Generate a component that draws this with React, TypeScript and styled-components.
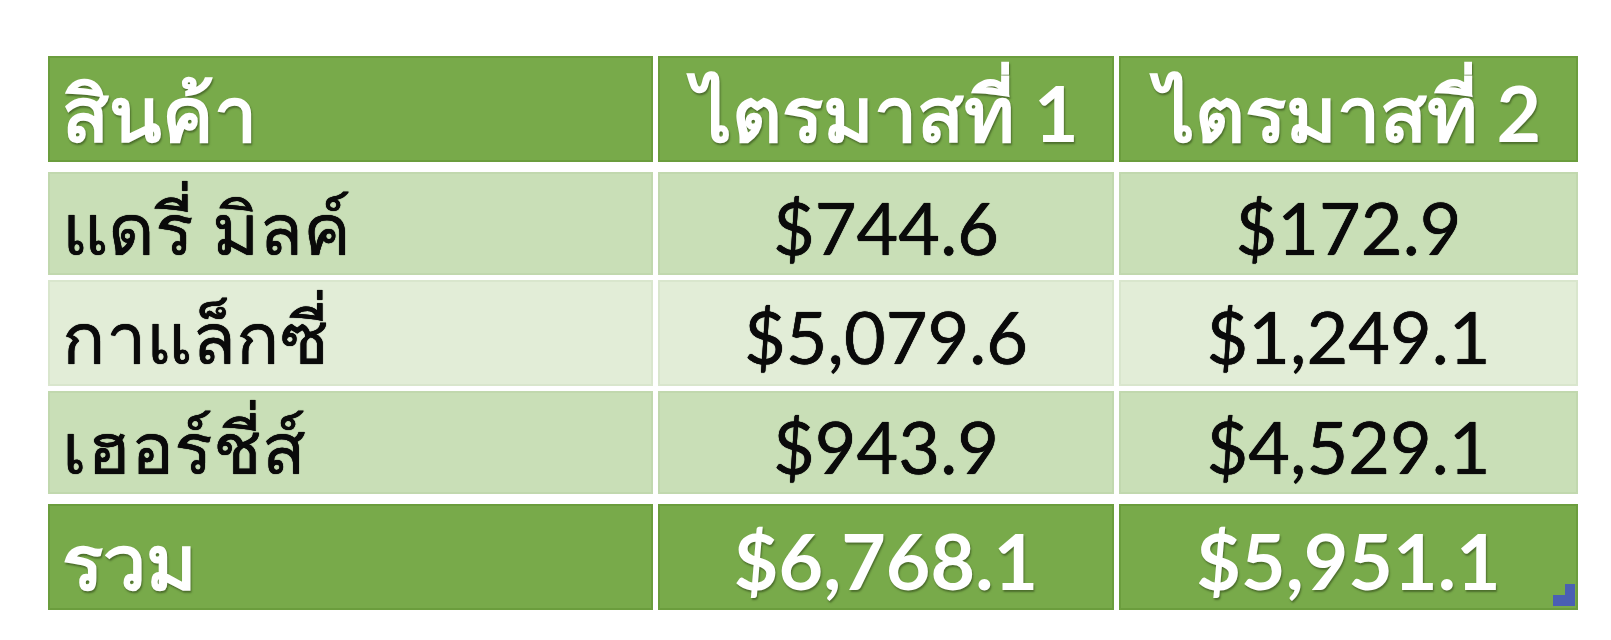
import React from "react";
import styled, { createGlobalStyle } from "styled-components";

const GlobalStyle = createGlobalStyle`
  html, body {
    margin: 0;
    padding: 0;
    background: #ffffff;
  }
  body {
    font-family: Lato, "Noto Sans", "DejaVu Sans", sans-serif;
  }
`;

type Row = { name: string; q1: string; q2: string };

const rows: Row[] = [
  { name: "แดรี่ มิลค์", q1: "$744.6", q2: "$172.9" },
  { name: "กาแล็กซี่", q1: "$5,079.6", q2: "$1,249.1" },
  { name: "เฮอร์ชี่ส์", q1: "$943.9", q2: "$4,529.1" },
];

const Page = styled.div`
  width: 1611px;
  height: 640px;
  padding: 56px 33px 0 48px;
  box-sizing: border-box;
`;

const Table = styled.div`
  position: relative;
  width: 1530px;
  display: flex;
  flex-direction: column;
  gap: 10px;
`;

const Section = styled.div<{ $rows: string }>`
  display: grid;
  grid-template-columns: 605px 456px 459px;
  grid-template-rows: ${(p) => p.$rows};
  gap: 5px;
`;

const Cell = styled.div<{ $kind: "head" | "odd" | "even"; $center?: boolean }>`
  display: flex;
  align-items: center;
  justify-content: ${(p) => (p.$center ? "center" : "flex-start")};
  padding: ${(p) => (p.$center ? "6px 12px 0" : "6px 0 0 12px")};
  box-sizing: border-box;
  font-size: ${(p) => (p.$kind === "head" ? "77px" : "72px")};
  line-height: 1;
  background: ${(p) =>
    p.$kind === "head" ? "#78aa4a" : p.$kind === "odd" ? "#c9dfb7" : "#e2edd7"};
  border: 2px solid
    ${(p) => (p.$kind === "head" ? "#6b9d3d" : p.$kind === "odd" ? "#c1d8ae" : "#d9e6cd")};
  color: ${(p) => (p.$kind === "head" ? "#ffffff" : "#0a0a0a")};
  font-weight: ${(p) => (p.$kind === "head" ? 700 : 400)};
  text-shadow: ${(p) =>
    p.$kind === "head"
      ? "1px 2px 2px rgba(40, 60, 20, 0.55)"
      : "0 0 0.7px #0a0a0a, 0 0 0.7px #0a0a0a"};
  white-space: nowrap;
`;

const Handle = styled.svg`
  position: absolute;
  right: 3px;
  bottom: 4px;
`;

export default function App() {
  return (
    <>
      <GlobalStyle />
      <Page>
        <Table>
          <Section $rows="106px">
            <Cell $kind="head">สินค้า</Cell>
            <Cell $kind="head" $center>ไตรมาสที่ 1</Cell>
            <Cell $kind="head" $center>ไตรมาสที่ 2</Cell>
          </Section>
          <Section $rows="103px 106px 103px">
            {rows.map((r, i) => {
              const kind = i % 2 === 0 ? "odd" : "even";
              return (
                <React.Fragment key={r.name}>
                  <Cell $kind={kind}>{r.name}</Cell>
                  <Cell $kind={kind} $center>{r.q1}</Cell>
                  <Cell $kind={kind} $center>{r.q2}</Cell>
                </React.Fragment>
              );
            })}
          </Section>
          <Section $rows="106px">
            <Cell $kind="head">รวม</Cell>
            <Cell $kind="head" $center>$6,768.1</Cell>
            <Cell $kind="head" $center>$5,951.1</Cell>
          </Section>
          <Handle width="22" height="22" viewBox="0 0 22 22">
            <path d="M12 0H22V22H0V11H12Z" fill="#4a5fb3" />
          </Handle>
        </Table>
      </Page>
    </>
  );
}
